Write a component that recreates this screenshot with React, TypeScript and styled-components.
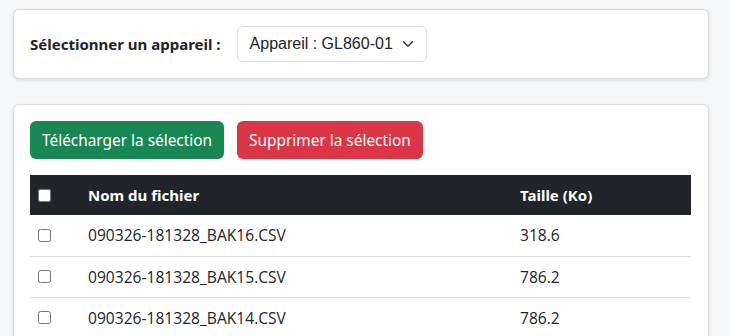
import React from "react";
import styled, { createGlobalStyle } from "styled-components";

const Global = createGlobalStyle`
  html, body { margin: 0; padding: 0; background: #f5f6f8; }
  body { font-family: "Noto Sans", "Open Sans", sans-serif; color: #212529; font-size: 16px; }
  * { box-sizing: border-box; }
`;

const Page = styled.div`
  padding: 9px 21px 0 13px;
  display: flex;
  flex-direction: column;
  gap: 25px;
`;

const Card = styled.section`
  background: #fff;
  border: 1px solid rgba(0, 0, 0, 0.14);
  border-radius: 6px;
  box-shadow: 0 1px 3px rgba(0, 0, 0, 0.12);
  padding: 16px;
`;

const DeviceRow = styled.div`
  display: flex;
  align-items: center;
  gap: 16px;
`;

const Label = styled.label`
  font-family: "Noto Sans", sans-serif;
  font-weight: 700;
  font-size: 15px;
`;

const Select = styled.div`
  display: flex;
  align-items: center;
  width: 190px;
  height: 36px;
  padding: 0 12px 0 12px;
  border: 1px solid #dee2e6;
  border-radius: 6px;
  font-family: "Liberation Sans", Arial, sans-serif;
  font-size: 16px;
  color: #212529;
  justify-content: space-between;
`;

const Toolbar = styled.div`
  display: flex;
  gap: 13px;
  margin-bottom: 16px;
`;

const Button = styled.button<{ $variant: "success" | "danger" }>`
  height: 38px;
  padding: 0 12px;
  border: none;
  border-radius: 6px;
  color: #fff;
  font-family: "Noto Sans", sans-serif;
  font-size: 15.4px;
  background: ${(p) => (p.$variant === "success" ? "#198754" : "#dc3545")};
`;

const Table = styled.table`
  width: 661px;
  border-collapse: collapse;
`;

const Th = styled.th<{ $w?: number }>`
  background: #212529;
  color: #fff;
  text-align: left;
  font-weight: 700;
  font-size: 15px;
  height: 40px;
  padding: 0 8px;
  width: ${(p) => (p.$w ? `${p.$w}px` : "auto")};
`;

const Td = styled.td`
  height: 41px;
  padding: 0 8px;
  border-bottom: 1px solid #dee2e6;
  font-family: "Open Sans", sans-serif;
  font-size: 15.6px;
  color: #212529;
`;

const Check = styled.input`
  margin: 0;
  width: 13px;
  height: 13px;
  display: block;
`;

const files = [
  { name: "090326-181328_BAK16.CSV", size: "318.6" },
  { name: "090326-181328_BAK15.CSV", size: "786.2" },
  { name: "090326-181328_BAK14.CSV", size: "786.2" },
];

export default function App() {
  return (
    <>
      <Global />
      <Page>
        <Card>
          <DeviceRow>
            <Label>Sélectionner un appareil :</Label>
            <Select>
              <span>Appareil : GL860-01</span>
              <svg width="12" height="12" viewBox="0 0 16 16" fill="none" stroke="#343a40" strokeWidth="2" strokeLinecap="round" strokeLinejoin="round">
                <path d="M2 5l6 6 6-6" />
              </svg>
            </Select>
          </DeviceRow>
        </Card>
        <Card>
          <Toolbar>
            <Button $variant="success">Télécharger la sélection</Button>
            <Button $variant="danger">Supprimer la sélection</Button>
          </Toolbar>
          <Table>
            <thead>
              <tr>
                <Th $w={50}><Check type="checkbox" /></Th>
                <Th $w={432}>Nom du fichier</Th>
                <Th>Taille (Ko)</Th>
              </tr>
            </thead>
            <tbody>
              {files.map((f) => (
                <tr key={f.name}>
                  <Td><Check type="checkbox" /></Td>
                  <Td>{f.name}</Td>
                  <Td>{f.size}</Td>
                </tr>
              ))}
            </tbody>
          </Table>
        </Card>
      </Page>
    </>
  );
}
